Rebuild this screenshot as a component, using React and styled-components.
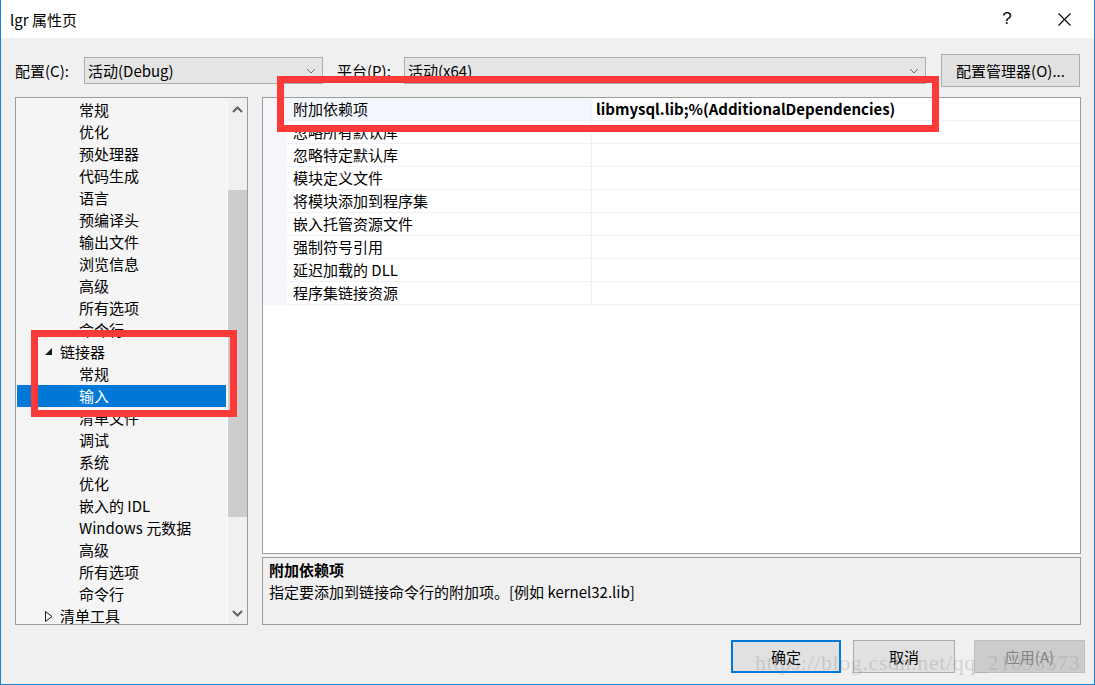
import React from "react";
import styled, { createGlobalStyle } from "styled-components";

const FONT = `"Noto Sans CJK SC", "Noto Sans", sans-serif`;

const GlobalStyle = createGlobalStyle`
  html, body { margin: 0; padding: 0; background: #ffffff; }
  body { font-family: ${FONT}; color: #000; }
  * { box-sizing: border-box; }
`;

const Window = styled.div`
  position: relative;
  width: 1095px;
  height: 685px;
  display: flex;
  flex-direction: column;
  background: #f0f0f0;
  border: 1px solid #1883d7;
  border-top: none;
  overflow: hidden;
  font-family: ${FONT};
  font-size: 15px;
`;

const TitleBar = styled.div`
  height: 38px;
  flex-shrink: 0;
  display: flex;
  align-items: center;
  background: #ffffff;
  padding: 0 7px 0 9px;
`;

const TitleText = styled.div`
  flex: 1;
  font-size: 15px;
  line-height: 20px;
  padding-top: 1px;
`;

const TitleButton = styled.div`
  width: 46px;
  height: 30px;
  display: flex;
  align-items: center;
  justify-content: center;
  margin-left: ${(p) => p.$gap || 0}px;
  font-family: "Liberation Sans", sans-serif;
  font-size: 17px;
`;

const Content = styled.div`
  display: flex;
  flex-direction: column;
  padding: 16px 13px 0 14px;
`;

const ConfigRow = styled.div`
  display: flex;
  align-items: center;
  height: 33px;
`;

const Label = styled.div`
  width: ${(p) => p.$w}px;
  margin-left: ${(p) => p.$ml || 0}px;
  line-height: 20px;
  white-space: nowrap;
`;

const Combo = styled.div`
  width: ${(p) => p.$w}px;
  height: 27px;
  display: flex;
  align-items: center;
  justify-content: space-between;
  padding: 0 6px 0 3px;
  border: 1px solid #adadad;
  background: #e5e5e5;
  line-height: 20px;
`;

const PushButton = styled.div`
  width: ${(p) => p.$w}px;
  height: 33px;
  margin-left: ${(p) => p.$ml || 0}px;
  display: flex;
  align-items: center;
  justify-content: center;
  background: ${(p) => (p.$disabled ? "#cccccc" : "#e1e1e1")};
  color: ${(p) => (p.$disabled ? "#838383" : "#000")};
  border: ${(p) =>
    p.$primary ? "2px solid #0078d7" : p.$disabled ? "1px solid #bfbfbf" : "1px solid #adadad"};
  line-height: 20px;
  white-space: nowrap;
`;

const Main = styled.div`
  display: flex;
  gap: 14px;
  margin-top: 10px;
  height: 528px;
`;

const TreePanel = styled.div`
  width: 233px;
  height: 528px;
  flex-shrink: 0;
  display: flex;
  border: 1px solid #9c9c9c;
  background: #f5f5f5;
`;

const TreeList = styled.div`
  flex: 1;
  padding: 1px 1px 0 1px;
  overflow: hidden;
`;

const TreeRow = styled.div`
  height: 22px;
  display: flex;
  align-items: center;
  padding-left: ${(p) => (p.$level === 1 ? 28 : 62)}px;
  background: ${(p) => (p.$selected ? "#0078d7" : "transparent")};
  color: ${(p) => (p.$selected ? "#ffffff" : "#000")};
  line-height: 20px;
  white-space: nowrap;
`;

const Expander = styled.span`
  width: 15px;
  height: 22px;
  display: flex;
  align-items: center;
  flex-shrink: 0;
`;

const ScrollBar = styled.div`
  width: 20px;
  display: flex;
  flex-direction: column;
  background: #f0f0f0;
  border-left: 1px solid #fafafa;
`;

const ScrollArrow = styled.div`
  height: 22px;
  display: flex;
  align-items: center;
  justify-content: center;
  flex-shrink: 0;
`;

const ScrollTrack = styled.div`
  flex: 1;
  padding-top: ${(p) => p.$offset}px;
`;

const ScrollThumb = styled.div`
  height: ${(p) => p.$h}px;
  background: #cdcdcd;
`;

const RightCol = styled.div`
  flex: 1;
  display: flex;
  flex-direction: column;
  gap: 3px;
`;

const Grid = styled.div`
  height: 457px;
  border: 1px solid #9c9c9c;
  background: #ffffff;
  display: flex;
  flex-direction: column;
`;

const GridRow = styled.div`
  display: grid;
  grid-template-columns: 24px 305px 1fr;
  height: 23px;
`;

const Gutter = styled.div`
  background: #f5f7fb;
`;

const NameCell = styled.div`
  display: flex;
  align-items: center;
  padding-left: 6px;
  background: ${(p) => (p.$active ? "#f3f6fc" : "#ffffff")};
  border-bottom: 1px solid #eef1f7;
  border-right: 1px solid #eef1f7;
  line-height: 20px;
  white-space: nowrap;
`;

const ValueCell = styled.div`
  display: flex;
  align-items: center;
  padding-left: 4px;
  border-bottom: 1px solid #eef1f7;
  font-weight: ${(p) => (p.$bold ? 700 : 400)};
  line-height: 20px;
  white-space: nowrap;
`;

const Desc = styled.div`
  height: 68px;
  border: 1px solid #9c9c9c;
  background: #f0f0f0;
  padding: 1px 6px 0 6px;
`;

const DescTitle = styled.div`
  font-weight: 700;
  line-height: 22px;
`;

const DescText = styled.div`
  line-height: 22px;
`;

const Footer = styled.div`
  display: flex;
  justify-content: flex-end;
  padding: 15px 9px 0 0;
`;

const RedBox = styled.div`
  position: absolute;
  left: ${(p) => p.$x}px;
  top: ${(p) => p.$y}px;
  width: ${(p) => p.$w}px;
  height: ${(p) => p.$h}px;
  border: 7px solid #fc3a3a;
  pointer-events: none;
`;

const Watermark = styled.div`
  position: absolute;
  left: 754px;
  top: 650px;
  font-family: "Liberation Serif", serif;
  font-size: 22px;
  letter-spacing: 0.6px;
  color: rgba(150, 150, 150, 0.35);
  pointer-events: none;
  white-space: nowrap;
`;

const ComboChevron = () => (
  <svg width="10" height="6" viewBox="0 0 10 6">
    <polyline points="1,1 5,5 9,1" fill="none" stroke="#707070" strokeWidth="1" />
  </svg>
);

const ScrollChevron = ({ up }) => (
  <svg width="11" height="7" viewBox="0 0 11 7">
    <polyline
      points={up ? "1,6 5.5,1.5 10,6" : "1,1 5.5,5.5 10,1"}
      fill="none"
      stroke="#606060"
      strokeWidth="2"
    />
  </svg>
);

const CloseIcon = () => (
  <svg width="13" height="13" viewBox="0 0 13 13">
    <path d="M0.5 0.5 L12.5 12.5 M12.5 0.5 L0.5 12.5" stroke="#000" strokeWidth="1.1" />
  </svg>
);

const ExpandedIcon = () => (
  <svg width="8" height="8" viewBox="0 0 8 8">
    <polygon points="7,0 7,7 0,7" fill="#1a1a1a" />
  </svg>
);

const CollapsedIcon = () => (
  <svg width="8" height="11" viewBox="0 0 8 11">
    <polygon points="0.5,0.5 7,5.5 0.5,10.5" fill="none" stroke="#1a1a1a" strokeWidth="1" />
  </svg>
);

const treeItems = [
  { t: "常规" },
  { t: "优化" },
  { t: "预处理器" },
  { t: "代码生成" },
  { t: "语言" },
  { t: "预编译头" },
  { t: "输出文件" },
  { t: "浏览信息" },
  { t: "高级" },
  { t: "所有选项" },
  { t: "命令行" },
  { t: "链接器", level: 1, open: true },
  { t: "常规" },
  { t: "输入", selected: true },
  { t: "清单文件" },
  { t: "调试" },
  { t: "系统" },
  { t: "优化" },
  { t: "嵌入的 IDL" },
  { t: "Windows 元数据" },
  { t: "高级" },
  { t: "所有选项" },
  { t: "命令行" },
  { t: "清单工具", level: 1, open: false },
];

const props = [
  { n: "附加依赖项", v: "libmysql.lib;%(AdditionalDependencies)", active: true },
  { n: "忽略所有默认库" },
  { n: "忽略特定默认库" },
  { n: "模块定义文件" },
  { n: "将模块添加到程序集" },
  { n: "嵌入托管资源文件" },
  { n: "强制符号引用" },
  { n: "延迟加载的 DLL" },
  { n: "程序集链接资源" },
];

export default function App() {
  return (
    <>
      <GlobalStyle />
      <Window>
        <TitleBar>
          <TitleText>lgr 属性页</TitleText>
          <TitleButton>?</TitleButton>
          <TitleButton $gap={11}>
            <CloseIcon />
          </TitleButton>
        </TitleBar>
        <Content>
          <ConfigRow>
            <Label $w={69}>配置(C):</Label>
            <Combo $w={239}>
              <span>活动(Debug)</span>
              <ComboChevron />
            </Combo>
            <Label $w={67} $ml={14}>平台(P):</Label>
            <Combo $w={522}>
              <span>活动(x64)</span>
              <ComboChevron />
            </Combo>
            <PushButton $w={139} $ml={15}>配置管理器(O)...</PushButton>
          </ConfigRow>
          <Main>
            <TreePanel>
              <TreeList>
                {treeItems.map((it, i) => (
                  <TreeRow key={i} $level={it.level || 2} $selected={it.selected}>
                    {it.level === 1 && (
                      <Expander>{it.open ? <ExpandedIcon /> : <CollapsedIcon />}</Expander>
                    )}
                    {it.t}
                  </TreeRow>
                ))}
              </TreeList>
              <ScrollBar>
                <ScrollArrow>
                  <ScrollChevron up />
                </ScrollArrow>
                <ScrollTrack $offset={70}>
                  <ScrollThumb $h={327} />
                </ScrollTrack>
                <ScrollArrow>
                  <ScrollChevron />
                </ScrollArrow>
              </ScrollBar>
            </TreePanel>
            <RightCol>
              <Grid>
                {props.map((p, i) => (
                  <GridRow key={i}>
                    <Gutter />
                    <NameCell $active={p.active}>{p.n}</NameCell>
                    <ValueCell $bold={!!p.v}>{p.v || ""}</ValueCell>
                  </GridRow>
                ))}
              </Grid>
              <Desc>
                <DescTitle>附加依赖项</DescTitle>
                <DescText>指定要添加到链接命令行的附加项。[例如 kernel32.lib]</DescText>
              </Desc>
            </RightCol>
          </Main>
        </Content>
        <Footer>
          <PushButton $w={110} $primary>确定</PushButton>
          <PushButton $w={102} $ml={12}>取消</PushButton>
          <PushButton $w={111} $ml={19} $disabled>应用(A)</PushButton>
        </Footer>
        <RedBox $x={30} $y={330} $w={206} $h={87} />
        <RedBox $x={276} $y={76} $w={662} $h={56} />
        <Watermark>https://blog.csdn.net/qq_21095573</Watermark>
      </Window>
    </>
  );
}
